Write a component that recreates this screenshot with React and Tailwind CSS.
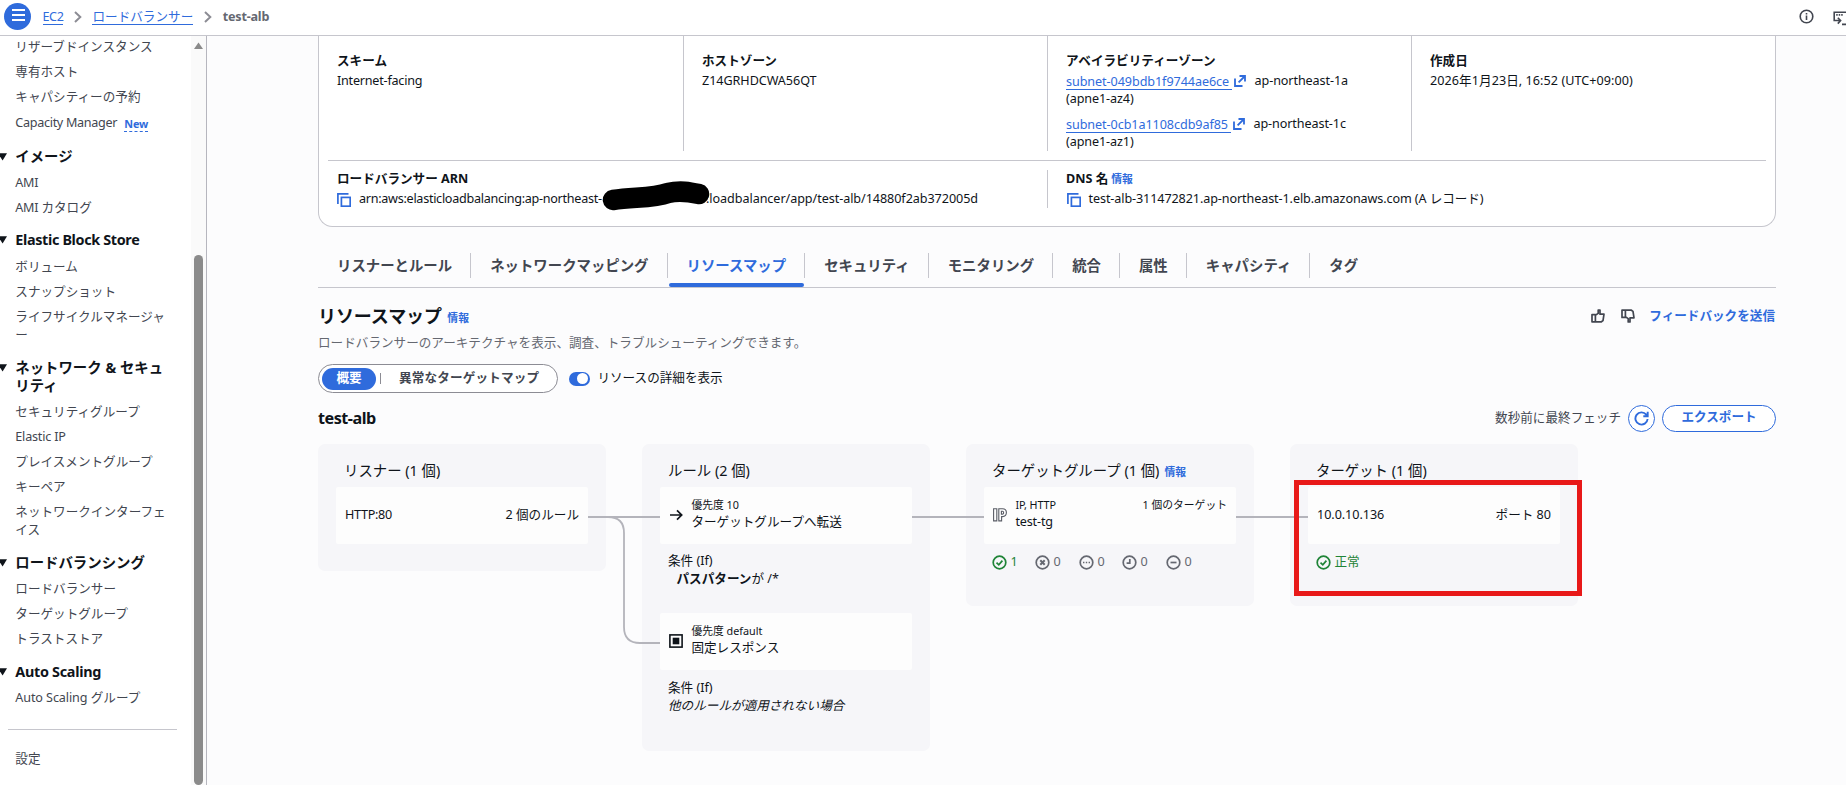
import React from "react";

const LINK = "text-[#2f6bdc]";

function Item({ children, className = "" }) {
  return <li className={"py-[3.6px] leading-[18px] text-[12.6px] text-[#424650] " + className}>{children}</li>;
}

function Group({ title, className = "", children }) {
  return (
    <section className="pt-[11px]">
      <div className="relative pb-[4.5px]">
        <svg className="absolute -left-[16px] top-[5px] h-[8px] w-[8px]" viewBox="0 0 8 8">
          <path d="M-1 0.3H8L3.6 7.6Z" fill="#0f141a" />
        </svg>
        <h3 className={"text-[14.4px] font-bold leading-[18px] text-[#0f141a] " + className}>{title}</h3>
      </div>
      <ul>{children}</ul>
    </section>
  );
}

function Chevron() {
  return (
    <svg className="h-[12px] w-[8px] shrink-0" viewBox="0 0 8 12" fill="none" stroke="#8c8c94" strokeWidth="2">
      <path d="M1 1L6.3 6L1 11" />
    </svg>
  );
}

function CopyIcon() {
  return (
    <svg className="h-[14px] w-[14px] shrink-0" viewBox="0 0 14 14" fill="none" stroke="#2f6bdc" strokeWidth="1.7">
      <path d="M0.9 11V0.9H11.5" />
      <rect x="4.4" y="4.4" width="8.8" height="8.8" />
    </svg>
  );
}

function ExternalIcon() {
  return (
    <svg className="h-[12px] w-[12px] shrink-0" viewBox="0 0 12 12" fill="none" stroke="#2f6bdc" strokeWidth="1.8">
      <path d="M1 3.5V11H8.5" />
      <path d="M5.5 1H11V6.5M11 1L4.6 7.4" />
    </svg>
  );
}

function Label({ children }) {
  return <div className="text-[12.6px] font-bold leading-[18px] text-[#0f141a]">{children}</div>;
}

function Info({ className = "" }) {
  return <span className={"text-[10.8px] font-bold " + LINK + " " + className}>情報</span>;
}

function Subnet({ id, zone, az, idClass }) {
  return (
    <div className="leading-[18px]">
      <div className="flex h-[18px] items-center">
        <span className={"h-[17px] border-b border-[#2f6bdc] pr-[3px] leading-[17px] " + LINK + " " + idClass}>{id}</span>
        <span className="ml-[1.5px] mr-[9px] flex"><ExternalIcon /></span>
        <span className="tracking-[-0.1px]">{zone}</span>
      </div>
      <div className="tracking-[-0.1px]">({az})</div>
    </div>
  );
}

function Tab({ children, active, last }) {
  return (
    <div className="relative flex h-[40px] items-start pt-[6px]">
      <div className={"flex h-[25px] items-center pl-[19px] pr-[18.05px] pt-px text-[14.4px] font-bold leading-[18px] " + (active ? LINK : "text-[#424650]") + (last ? "" : " border-r border-[#c6c6cd]")}>
        {children}
      </div>
      {active && <div className="absolute bottom-0 left-[1px] right-[1px] h-[4px] rounded-full bg-[#2f6bdc]" />}
    </div>
  );
}

function Column({ title, info, className = "", children }) {
  return (
    <div className={"w-[288px] shrink-0 rounded-[7px] bg-[#f6f6f9] px-[18px] pt-[17px] " + className}>
      <div className="flex h-[26px] items-start whitespace-nowrap pl-[8px] text-[14.4px] leading-[20px] text-[#0f141a]">
        <span>{title}</span>
        {info && <Info className="ml-[5px] leading-[22px]" />}
      </div>
      {children}
    </div>
  );
}

function Box({ children }) {
  return <div className="flex h-[57px] items-center rounded-[2px] bg-[#fdfdfd] px-[9px] pb-[2px] text-[12.6px] leading-[18px]">{children}</div>;
}

function StatusIcon({ color, children }) {
  return (
    <svg className="h-[15px] w-[15px] shrink-0" viewBox="0 0 15 15" fill="none" stroke={color} strokeWidth="1.7">
      <circle cx="7.5" cy="7.5" r="6.3" />
      {children}
    </svg>
  );
}

const Check = () => <path d="M4.5 7.6L6.8 9.8L10.4 5.6" />;

function Count({ n, green, children, className = "" }) {
  return (
    <div className={"flex items-center gap-[4px] text-[12.6px] " + (green ? "text-[#1f8437]" : "text-[#656871]") + " " + className}>
      <StatusIcon color={green ? "#1f8437" : "#656871"}>{children}</StatusIcon>
      <span>{n}</span>
    </div>
  );
}

function Sidebar() {
  return (
    <aside className="flex w-[207px] shrink-0 justify-between overflow-hidden border-r border-[#b6b6be] bg-white">
      <nav className="-mt-[2px] w-[177px] pl-[15.3px]">
        <ul className="w-[152px]">
          <Item>リザーブドインスタンス</Item>
          <Item>専有ホスト</Item>
          <Item>キャパシティーの予約</Item>
          <Item className="flex h-[27px] items-center">
            <span className="tracking-[-0.3px]">Capacity Manager</span>
            <span className={"ml-[7px] h-[17px] border-b border-dashed border-[#2f6bdc] text-[10.8px] font-bold leading-[17px] tracking-[-0.1px] " + LINK}>New</span>
          </Item>
        </ul>
        <div className="w-[152px]">
          <Group title="イメージ">
            <Item><span className="tracking-[-0.3px]">AMI</span></Item>
            <Item><span className="tracking-[-0.3px]">AMI</span> カタログ</Item>
          </Group>
          <Group title="Elastic Block Store" className="tracking-[-0.35px]">
            <Item>ボリューム</Item>
            <Item>スナップショット</Item>
            <Item>ライフサイクルマネージャー</Item>
          </Group>
          <Group title="ネットワーク & セキュリティ">
            <Item>セキュリティグループ</Item>
            <Item><span className="tracking-[-0.2px]">Elastic IP</span></Item>
            <Item>プレイスメントグループ</Item>
            <Item>キーペア</Item>
            <Item>ネットワークインターフェイス</Item>
          </Group>
          <Group title="ロードバランシング">
            <Item>ロードバランサー</Item>
            <Item>ターゲットグループ</Item>
            <Item>トラストストア</Item>
          </Group>
          <Group title="Auto Scaling" className="tracking-[-0.3px]">
            <Item><span className="tracking-[-0.1px]">Auto Scaling</span> グループ</Item>
          </Group>
        </div>
        <div className="-ml-[7.3px] mt-[18px] w-[169px] border-t border-[#c6c6cd]" />
        <div className="mt-[20.5px] text-[12.6px] leading-[18px] text-[#424650]">設定</div>
      </nav>
      <div className="flex w-[15px] flex-col items-center bg-[#fafafa] pt-[6px]">
        <svg className="h-[7px] w-[9px]" viewBox="0 0 9 7"><path d="M4.5 0.5L9 7H0Z" fill="#8a8a8a" /></svg>
        <div className="mt-[206px] h-[530px] w-[9px] rounded-full bg-[#8b8b8b]" />
      </div>
    </aside>
  );
}

function Details() {
  return (
    <section className="relative h-[191px] w-[1458px] rounded-b-[14.4px] border border-t-0 border-[#c6c6cd] bg-white px-[9px] text-[12.6px] leading-[18px] text-[#0f141a]">
      <div className="flex h-[115px]">
        <div className="w-[356px] border-r border-[#c6c6cd] pl-[9px] pt-[15.5px]">
          <Label>スキーム</Label>
          <div className="mt-[2.5px] tracking-[-0.22px]">Internet-facing</div>
        </div>
        <div className="w-[364px] border-r border-[#c6c6cd] pl-[18px] pt-[15.5px]">
          <Label>ホストゾーン</Label>
          <div className="mt-[2.5px] tracking-[-0.05px]">Z14GRHDCWA56QT</div>
        </div>
        <div className="w-[364px] border-r border-[#c6c6cd] pl-[18px] pt-[15.5px]">
          <Label>アベイラビリティーゾーン</Label>
          <div className="mt-[2.5px] flex flex-col gap-[7px]">
            <Subnet id="subnet-049bdb1f9744ae6ce" zone="ap-northeast-1a" az="apne1-az4" idClass="tracking-[-0.07px]" />
            <Subnet id="subnet-0cb1a1108cdb9af85" zone="ap-northeast-1c" az="apne1-az1" idClass="tracking-[-0.07px]" />
          </div>
        </div>
        <div className="pl-[18px] pt-[15.5px]">
          <Label>作成日</Label>
          <div className="mt-[2.5px] tracking-[0.06px]">2026年1月23日, 16:52 (UTC+09:00)</div>
        </div>
      </div>
      <div className="mt-[9px] border-t border-[#c6c6cd]" />
      <div className="mt-[9px] flex h-[38px]">
        <div className="w-[720px] border-r border-[#c6c6cd] pl-[9px]">
          <Label>ロードバランサー ARN</Label>
          <div className="relative mt-[2px] flex h-[18px] items-center whitespace-nowrap">
            <span className="mt-px"><CopyIcon /></span>
            <span className="ml-[8px] w-[245px] tracking-[-0.28px]">arn:aws:elasticloadbalancing:ap-northeast-</span>
            <span className="ml-[102px] tracking-[-0.06px]">:loadbalancer/app/test-alb/14880f2ab372005d</span>
            <svg className="absolute left-[265px] -top-[9px] h-[30px] w-[110px]" viewBox="0 0 110 30">
              <path d="M11 19C34 16 52 17 66 12C78 9 88 11 97 13" fill="none" stroke="#000" strokeWidth="20.5" strokeLinecap="round" strokeLinejoin="round" />
            </svg>
          </div>
        </div>
        <div className="pl-[18px]">
          <div className="flex"><Label>DNS 名</Label><Info className="ml-[3px]" /></div>
          <div className="mt-[2px] flex h-[18px] items-center whitespace-nowrap">
            <span className="ml-[0.5px] mt-px"><CopyIcon /></span>
            <span className="ml-[8px] tracking-[-0.1px]">test-alb-311472821.ap-northeast-1.elb.amazonaws.com (A レコード)</span>
          </div>
        </div>
      </div>
    </section>
  );
}

function ThumbUp() {
  return (
    <svg className="h-[14px] w-[14px]" viewBox="0 0 14 14" fill="none" stroke="#424650" strokeWidth="1.7" strokeLinejoin="round">
      <path d="M1 5.6H4.4V12.8H1ZM4.4 6.2L7.2 4.4V1H9V5.2H13L12 11.6L10.4 12.8H4.4" />
    </svg>
  );
}

function ResourceMap() {
  return (
    <div className="relative flex items-start gap-[36px]">
      <Column title="リスナー (1 個)" className="h-[127px]">
        <Box>
          <span className="tracking-[-0.3px]">HTTP:80</span>
          <span className="ml-auto">2 個のルール</span>
        </Box>
      </Column>
      <Column title="ルール (2 個)" className="h-[307px]">
        <Box>
          <svg className="h-[12px] w-[14px]" viewBox="0 0 14 12" fill="none" stroke="#0f141a" strokeWidth="1.7"><path d="M1 6H12.5M8 1.3L12.7 6L8 10.7" /></svg>
          <div className="ml-[8.4px] -mt-[2px]">
            <div className="text-[10.8px] leading-[16px]">優先度 10</div>
            <div>ターゲットグループへ転送</div>
          </div>
        </Box>
        <div className="h-[69px] pl-[8px] pt-[8px] text-[12.6px] leading-[18px]">
          <div>条件 (If)</div>
          <div className="pl-[8.5px]"><b>パスパターン</b>が /*</div>
        </div>
        <Box>
          <svg className="h-[14px] w-[14px]" viewBox="0 0 14 14"><rect x="0.9" y="0.9" width="12.2" height="12.2" fill="none" stroke="#0f141a" strokeWidth="1.6" /><rect x="3.7" y="3.7" width="6.6" height="6.6" fill="#0f141a" /></svg>
          <div className="ml-[8.4px] -mt-[2px]">
            <div className="text-[10.8px] leading-[16px]">優先度 default</div>
            <div>固定レスポンス</div>
          </div>
        </Box>
        <div className="pl-[8px] pt-[8.5px] text-[12.6px] leading-[18px]">
          <div>条件 (If)</div>
          <div className="italic">他のルールが適用されない場合</div>
        </div>
      </Column>
      <Column title="ターゲットグループ (1 個)" info className="h-[162px]">
        <Box>
          <svg className="h-[14px] w-[14px]" viewBox="0 0 14 14" fill="none" stroke="#5a5d66" strokeWidth="1.1"><path d="M0.6 0.7H3.8V12.9H0.6ZM5.8 0.7H9.5C12.3 0.7 13.4 2.5 13.4 4.6C13.4 6.7 12.3 8.6 9.5 8.6H8.6V12.9H5.8ZM8.4 3.2H9.5C11 3.2 11 6.1 9.5 6.1H8.4Z" /></svg>
          <div className="ml-[8.4px] -mt-[2px] grow">
            <div className="flex justify-between text-[10.8px] leading-[16px]"><span className="tracking-[-0.1px]">IP, HTTP</span><span>1 個のターゲット</span></div>
            <div className="tracking-[-0.15px]">test-tg</div>
          </div>
        </Box>
        <div className="flex items-center pl-[7.5px] pt-[9px] leading-[18px]">
          <Count n="1" green className="w-[43px]"><Check /></Count>
          <Count n="0" className="w-[44px]"><path d="M5.3 5.3L9.7 9.7M9.7 5.3L5.3 9.7" strokeWidth="2" /></Count>
          <Count n="0" className="w-[43px]"><path d="M4 7.5H5.4M6.8 7.5H8.2M9.6 7.5H11" strokeWidth="1.6" /></Count>
          <Count n="0" className="w-[44px]"><path d="M7.8 4V8.2H4.6" /></Count>
          <Count n="0"><path d="M4.5 7.5H10.5" /></Count>
        </div>
      </Column>
      <Column title="ターゲット (1 個)" className="h-[162px]">
        <Box>
          <span className="tracking-[-0.05px]">10.0.10.136</span>
          <span className="ml-auto">ポート 80</span>
        </Box>
        <Count n="正常" green className="pl-[7.5px] pt-[9px] leading-[18px]"><Check /></Count>
      </Column>
      <svg className="pointer-events-none absolute left-0 top-0 h-[307px] w-[1278px]" viewBox="0 0 1278 307" fill="none" stroke="#b4b4bb" strokeWidth="2">
        <path d="M270 73H342M594 73H666M918 73H990" />
        <path strokeWidth="1.8" d="M270 73H290Q306 73 306 89V183Q306 199 322 199H342" />
      </svg>
      <div className="absolute left-[976px] top-[36px] h-[116px] w-[288px] border-[5px] border-[#e81919]" />
    </div>
  );
}

export default function App() {
  return (
    <div className="flex h-[785px] w-[1846px] flex-col overflow-hidden bg-[#fcfcfd] font-['Noto_Sans','Noto_Sans_CJK_JP',sans-serif] text-[#0f141a]">
      <header className="flex h-[36px] shrink-0 items-center border-b border-[#c6c6cd] bg-white pb-[3px] pl-[4px] text-[12.6px]">
        <div className="flex h-[27px] w-[27px] items-center justify-center rounded-full bg-[#2f6bdc]">
          <svg className="mb-[3px] ml-[2px] h-[12px] w-[13px]" viewBox="0 0 13 12" stroke="#fff" strokeWidth="1.8"><path d="M0 1H13M0 6H13M0 11H13" /></svg>
        </div>
        <span className={"ml-[11.5px] mt-px h-[17px] border-b border-[#2f6bdc] leading-[18px] tracking-[-0.4px] " + LINK}>EC2</span>
        <span className="ml-[11px] mr-[10px] mt-[2px]"><Chevron /></span>
        <span className={"mt-px h-[17px] border-b border-[#2f6bdc] leading-[18px] " + LINK}>ロードバランサー</span>
        <span className="ml-[11px] mr-[10.5px] mt-[2px]"><Chevron /></span>
        <span className="mt-px font-bold leading-[18px] tracking-[-0.2px] text-[#656871]">test-alb</span>
        <svg className="ml-auto h-[15px] w-[15px]" viewBox="0 0 15 15" fill="none" stroke="#424650" strokeWidth="1.6"><circle cx="7.5" cy="7.5" r="6.3" /><path d="M7.5 6.5V11M7.5 4V5.6" /></svg>
        <svg className="ml-[19px] mt-[5px] h-[15px] w-[13px]" viewBox="0 0 13 15" fill="none" stroke="#424650" strokeWidth="1.6">
          <path d="M13 1.2H1.2V9.5H7M4.8 6.7L7.6 9.5L4.8 12.6M13 13.4H9" />
          <path d="M3.2 3.9H10" strokeDasharray="1.5 1" />
        </svg>
      </header>
      <div className="flex min-h-0 grow">
        <Sidebar />
        <main className="w-[1569px] pl-[111px]">
          <Details />
          <div className="mt-[20px] flex w-[1458px] border-b border-[#c6c6cd]">
            <Tab>リスナーとルール</Tab>
            <Tab>ネットワークマッピング</Tab>
            <Tab active>リソースマップ</Tab>
            <Tab>セキュリティ</Tab>
            <Tab>モニタリング</Tab>
            <Tab>統合</Tab>
            <Tab>属性</Tab>
            <Tab>キャパシティ</Tab>
            <Tab last>タグ</Tab>
          </div>
          <div className="mt-[16px] flex h-[24px] w-[1458px] items-center">
            <h2 className="text-[18px] font-bold leading-[22px] tracking-[-0.1px]">リソースマップ</h2>
            <Info className="ml-[5.5px] mt-[5px]" />
            <span className="ml-auto"><ThumbUp /></span>
            <span className="ml-[16px] rotate-180 -scale-x-100"><ThumbUp /></span>
            <span className={"ml-[14px] mr-px text-[12.6px] font-bold " + LINK}>フィードバックを送信</span>
          </div>
          <p className="mt-[6px] text-[12.6px] leading-[18px] text-[#656871]">ロードバランサーのアーキテクチャを表示、調査、トラブルシューティングできます。</p>
          <div className="mt-[12px] flex h-[29px] items-center">
            <div className="flex h-[29px] w-[240px] items-center rounded-full border border-[#8c8c94] bg-white px-[3px] text-[12.6px] font-bold">
              <span className="flex h-[22px] w-[54px] items-center justify-center rounded-full bg-[#2f6bdc] text-white">概要</span>
              <span className="ml-[4px] h-[11px] w-px bg-[#8c8c94]" />
              <span className="ml-[18px] tracking-[0.16px] text-[#424650]">異常なターゲットマップ</span>
            </div>
            <span className="ml-[11px] flex h-[14px] w-[21px] items-center justify-end rounded-full bg-[#2f6bdc] pr-[2px]">
              <span className="h-[11px] w-[11px] rounded-full bg-white" />
            </span>
            <span className="ml-[7.4px] text-[12.6px]">リソースの詳細を表示</span>
          </div>
          <div className="mt-[12px] flex h-[27px] w-[1458px] items-center">
            <h3 className="text-[16.2px] font-bold tracking-[-0.5px]">test-alb</h3>
            <span className="ml-auto text-[12.6px] text-[#424650]">数秒前に最終フェッチ</span>
            <span className="ml-[7px] flex h-[27px] w-[27px] items-center justify-center rounded-full border border-[#2f6bdc] bg-white">
              <svg className="h-[15px] w-[15px]" viewBox="0 0 15 15" fill="none" stroke="#2f6bdc" strokeWidth="1.9"><path d="M13.6 8A6.1 6.1 0 1 1 12.3 3.7L13.4 5M13.7 0.8V5.2H9.3" /></svg>
            </span>
            <span className={"ml-[7px] flex h-[27px] w-[114px] items-center justify-center rounded-full border border-[#2f6bdc] bg-white pb-[2px] text-[12.6px] font-bold " + LINK}>エクスポート</span>
          </div>
          <div className="mt-[12px]"><ResourceMap /></div>
        </main>
      </div>
    </div>
  );
}
